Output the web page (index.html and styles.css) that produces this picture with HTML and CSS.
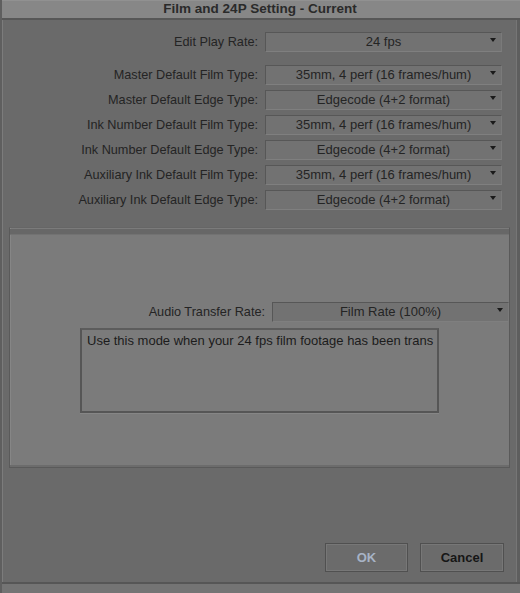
FILE: index.html
```html
<!DOCTYPE html>
<html>
<head>
<meta charset="utf-8">
<title>Film and 24P Setting - Current</title>
<link rel="stylesheet" href="styles.css">
</head>
<body>
<div class="window">
  <div class="titlebar">Film and 24P Setting - Current</div>
  <div class="settings">
    <div class="label first">Edit Play Rate:</div>
    <div class="select first">24 fps</div>
    <div class="label">Master Default Film Type:</div>
    <div class="select">35mm, 4 perf (16 frames/hum)</div>
    <div class="label">Master Default Edge Type:</div>
    <div class="select">Edgecode (4+2 format)</div>
    <div class="label">Ink Number Default Film Type:</div>
    <div class="select">35mm, 4 perf (16 frames/hum)</div>
    <div class="label">Ink Number Default Edge Type:</div>
    <div class="select">Edgecode (4+2 format)</div>
    <div class="label">Auxiliary Ink Default Film Type:</div>
    <div class="select">35mm, 4 perf (16 frames/hum)</div>
    <div class="label">Auxiliary Ink Default Edge Type:</div>
    <div class="select">Edgecode (4+2 format)</div>
  </div>
  <div class="panel">
    <div class="panel-head"></div>
    <div class="audio-row">
      <div class="label">Audio Transfer Rate:</div>
      <div class="select audio">Film Rate (100%)</div>
    </div>
    <div class="note">Use this mode when your 24 fps film footage has been trans</div>
  </div>
  <div class="footer">
    <button class="btn ok">OK</button>
    <button class="btn cancel">Cancel</button>
  </div>
  <div class="bottom-edge"></div>
</div>
</body>
</html>
```

FILE: styles.css
```css
html, body {
  margin: 0;
  padding: 0;
  background: #696969;
}

.window {
  width: 520px;
  height: 593px;
  box-sizing: border-box;
  background: #6a6a6a;
  border-left: 2px solid #5f5f5f;
  box-shadow: inset 1px 0 0 #7c7c7c, inset -3px 0 0 #5e5e5e, inset -4px 0 0 #767676;
  display: flex;
  flex-direction: column;
  font-family: "Liberation Sans", Arial, sans-serif;
  font-size: 12.7px;
  color: #242424;
  overflow: hidden;
}

.titlebar {
  height: 18px;
  line-height: 18px;
  margin-left: -2px;
  background: #878787;
  border-bottom: 2px solid #575757;
  text-align: center;
  font-weight: bold;
  font-size: 13.5px;
  color: #2a2a2a;
  box-shadow: inset 0 1px 0 #919191;
}

.settings {
  padding-top: 12px;
  display: grid;
  grid-template-columns: 256px 237px;
  grid-template-rows: 28px;
  grid-auto-rows: 20px;
  column-gap: 7px;
  row-gap: 5px;
}

.label {
  text-align: right;
  line-height: 20px;
  height: 20px;
  white-space: nowrap;
  color: #242424;
}

.settings .first {
  align-self: start;
}

.select {
  position: relative;
  box-sizing: border-box;
  height: 20px;
  line-height: 18px;
  font-size: 13px;
  text-align: center;
  background: #727272;
  border: 1px solid #575757;
  border-bottom-color: #7f7f7f;
  border-right-color: #7a7a7a;
  white-space: nowrap;
  color: #242424;
}

.select::after {
  content: "";
  position: absolute;
  right: 5px;
  top: 5px;
  border-left: 3.5px solid transparent;
  border-right: 3.5px solid transparent;
  border-top: 4px solid #1a1a1a;
}

.panel {
  margin: 17px 10px 0 7px;
  height: 241px;
  box-sizing: border-box;
  background: #7b7b7b;
  border: 1px solid #5a5a5a;
  border-top-color: #666666;
  box-shadow: inset 0 -2px 0 #6c6c6c, inset 1px 0 0 #868686;
  display: flex;
  flex-direction: column;
}

.panel-head {
  height: 5px;
  margin-top: 1px;
  background: #676767;
  border-bottom: 1px solid #727272;
}

.audio-row {
  margin-top: 67px;
  display: grid;
  grid-template-columns: 255px 237px;
  column-gap: 7px;
}

.select.audio {
  background: #727272;
}

.note {
  margin: 6px 0 0 70px;
  width: 359px;
  height: 85px;
  box-sizing: border-box;
  border: 2px solid #565656;
  border-top-color: #5c5c5c;
  background: #7b7b7b;
  padding: 3px 5px;
  white-space: nowrap;
  overflow: hidden;
  font-size: 13px;
  color: #1c1c1c;
  line-height: 16px;
  box-shadow: 0 1px 0 #868686;
}

.footer {
  flex: 1;
  display: flex;
  justify-content: flex-end;
  align-items: flex-start;
  gap: 12px;
  padding: 75px 16px 0 0;
}

.btn {
  height: 29px;
  box-sizing: border-box;
  background: #6b6b6b;
  border: 1px solid #505050;
  box-shadow: inset 0 0 0 1px #777777;
  font-family: "Liberation Sans", Arial, sans-serif;
  font-size: 13px;
  font-weight: bold;
  padding: 0;
}

.btn.ok {
  width: 83px;
  color: #a7b3c6;
}

.btn.cancel {
  width: 84px;
  color: #161616;
}

.bottom-edge {
  height: 9px;
  margin-left: -2px;
  background: #747474;
  border-top: 2px solid #565656;
}
```
